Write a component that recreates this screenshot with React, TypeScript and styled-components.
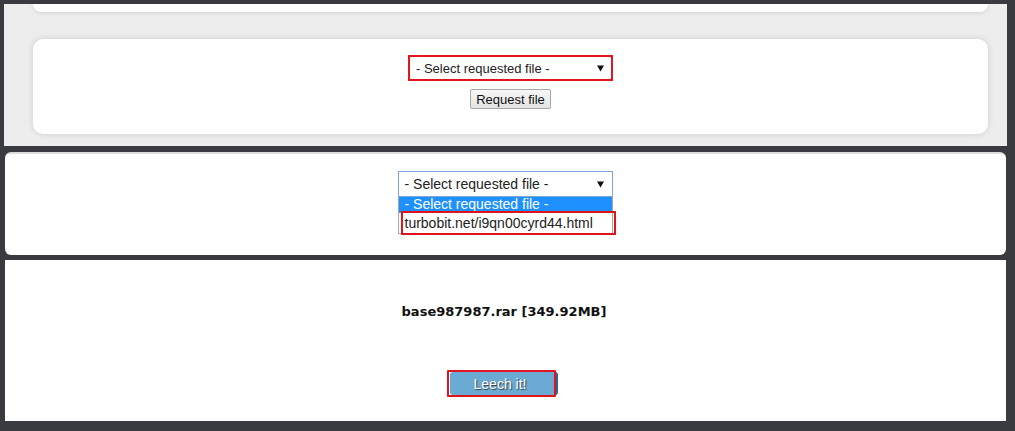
import React from "react";
import styled, { createGlobalStyle } from "styled-components";

const GlobalStyle = createGlobalStyle`
  html, body { margin: 0; padding: 0; background: #393b41; }
  body { font-family: "Liberation Sans", Arial, sans-serif; }
  * { box-sizing: border-box; }
`;

const Page = styled.div`
  display: flex;
  flex-direction: column;
  padding: 4px 8px 10px 4px;
  width: 1015px;
  height: 431px;
`;

const GreyPanel = styled.section`
  height: 142px;
  background: #ededed;
  display: flex;
  flex-direction: column;
  padding: 0 19px 0 29px;
`;

const CardStub = styled.div`
  height: 8px;
  background: #fff;
  border-radius: 0 0 10px 10px;
  box-shadow: 0 1px 4px rgba(0, 0, 0, 0.12);
`;

const Card = styled.div`
  margin-top: 27px;
  height: 95px;
  background: #fff;
  border-radius: 10px;
  box-shadow: 0 0 6px rgba(0, 0, 0, 0.14);
  display: flex;
  flex-direction: column;
  align-items: center;
  padding-top: 16px;
`;

const SelectBox = styled.div<{ $variant: "marked" | "focused" }>`
  width: ${(p) => (p.$variant === "marked" ? 205 : 215)}px;
  height: 26px;
  background: #fff;
  border: ${(p) =>
    p.$variant === "marked" ? "2px solid #e0141c" : "1px solid #7fa4d6"};
  display: flex;
  align-items: center;
  justify-content: space-between;
  padding: 0 ${(p) => (p.$variant === "marked" ? 7 : 8)}px 0 6px;
  font-size: ${(p) => (p.$variant === "marked" ? 13 : 14)}px;
  color: #222;
`;

const Arrow = () => (
  <svg width="7" height="8" viewBox="0 0 7 8" aria-hidden="true">
    <path d="M0 1.5 H7 L3.5 7.5 Z" fill="#111" />
  </svg>
);

const RequestButton = styled.button`
  margin-top: 8px;
  width: 81px;
  height: 20px;
  border: 1px solid #a8a8a8;
  border-radius: 2px;
  background: linear-gradient(#f7f7f7, #e4e4e4);
  font-family: "Liberation Sans", Arial, sans-serif;
  font-size: 13px;
  color: #111;
  padding: 0;
`;

const WhitePanel = styled.section<{ $h: number; $gap: number }>`
  margin: ${(p) => p.$gap}px 1px 0 1px;
  height: ${(p) => p.$h}px;
  background: #fff;
  border-radius: 6px;
  display: flex;
  flex-direction: column;
  align-items: center;
`;

const DropPanel = styled(WhitePanel)`
  border-top: 2px solid #dcdcdc;
  padding-top: 17px;
`;

const SelectWrap = styled.div`
  display: flex;
  flex-direction: column;
  margin-left: -1px;
`;

const OptionList = styled.div`
  width: 215px;
  border: 1px solid #a9a9a9;
  border-top: none;
  background: #fff;
`;

const Option = styled.div<{ $active?: boolean }>`
  position: relative;
  height: ${(p) => (p.$active ? 16 : 20)}px;
  line-height: ${(p) => (p.$active ? 15 : 20)}px;
  overflow: ${(p) => (p.$active ? "hidden" : "visible")};
  padding-left: 6px;
  font-size: 14px;
  background: ${(p) => (p.$active ? "#1e90ff" : "#fff")};
  color: ${(p) => (p.$active ? "#fff" : "#222")};
  white-space: nowrap;
`;

const Marker = styled.div`
  position: absolute;
  left: 2px;
  top: -2px;
  width: 215px;
  height: 24px;
  border: 2px solid #e0141c;
  pointer-events: none;
`;

const ResultPanel = styled(WhitePanel)`
  border-radius: 0;
  padding-top: 40px;
`;

const FileTitle = styled.div`
  font-family: "DejaVu Sans", Verdana, sans-serif;
  font-weight: bold;
  font-size: 13px;
  line-height: 24px;
  color: #111;
  margin-right: 3px;
`;

const Annotated = styled.div`
  margin-top: 46px;
  margin-right: 8px;
  position: relative;
  width: 109px;
  height: 27px;
  display: flex;
  align-items: center;
  padding-left: 3px;
  &::after {
    content: "";
    position: absolute;
    inset: 0;
    border: 2px solid #e0141c;
    border-radius: 1px;
  }
`;

const LeechButton = styled.button`
  width: 108px;
  height: 23px;
  margin-right: -2px;
  border: none;
  border-right: 2px solid #2f628c;
  border-radius: 3px;
  background: #6aaad3;
  color: #fff;
  font-family: "Liberation Sans", Arial, sans-serif;
  font-size: 14px;
  text-shadow: 1px 1px 1px #3a3a3a;
  padding: 0 6px 0 0;
`;

export default function App() {
  return (
    <>
      <GlobalStyle />
      <Page>
        <GreyPanel>
          <CardStub />
          <Card>
            <SelectBox $variant="marked">
              <span>- Select requested file -</span>
              <Arrow />
            </SelectBox>
            <RequestButton>Request file</RequestButton>
          </Card>
        </GreyPanel>

        <DropPanel $h={103} $gap={6}>
          <SelectWrap>
            <SelectBox $variant="focused">
              <span>- Select requested file -</span>
              <Arrow />
            </SelectBox>
            <OptionList>
              <Option $active>- Select requested file -</Option>
              <Option>
                turbobit.net/i9qn00cyrd44.html
                <Marker />
              </Option>
            </OptionList>
          </SelectWrap>
        </DropPanel>

        <ResultPanel $h={161} $gap={5}>
          <FileTitle>base987987.rar [349.92MB]</FileTitle>
          <Annotated>
            <LeechButton>Leech it!</LeechButton>
          </Annotated>
        </ResultPanel>
      </Page>
    </>
  );
}
